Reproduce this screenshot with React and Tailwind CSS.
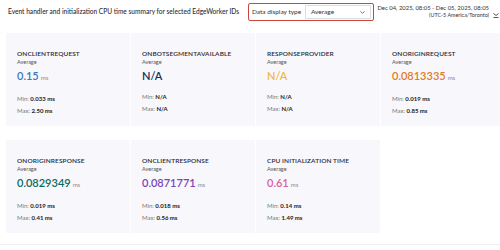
import React from 'react';
import { ChevronDown } from 'lucide-react';

const rowOne = [
  { name: 'ONCLIENTREQUEST', value: '0.15', unit: true, color: 'text-[#3a7cc0]', min: '0.033 ms', max: '2.50 ms' },
  { name: 'ONBOTSEGMENTAVAILABLE', value: 'N/A', unit: false, color: 'text-[#0d2f5a] font-bold', min: 'N/A', max: 'N/A' },
  { name: 'RESPONSEPROVIDER', value: 'N/A', unit: false, color: 'text-[#f1b744] font-bold', min: 'N/A', max: 'N/A' },
  { name: 'ONORIGINREQUEST', value: '0.0813335', unit: true, color: 'text-[#e27c1c]', min: '0.019 ms', max: '0.85 ms' },
];

const rowTwo = [
  { name: 'ONORIGINRESPONSE', value: '0.0829349', unit: true, color: 'text-[#0c6a62]', min: '0.019 ms', max: '0.41 ms' },
  { name: 'ONCLIENTRESPONSE', value: '0.0871771', unit: true, color: 'text-[#7b45b8]', min: '0.018 ms', max: '0.56 ms' },
  { name: 'CPU INITIALIZATION TIME', value: '0.61', unit: true, color: 'text-[#d5649c]', min: '0.14 ms', max: '1.49 ms' },
];

const MetricCard = ({ m }) => (
  <div className="bg-[#f8f7fc] pl-[11px] pt-[16px] pb-[11px]">
    <div className="text-[6.5px] leading-[9px] font-semibold text-[#2a2a33] tracking-[0.1px] whitespace-nowrap">{m.name}</div>
    <div className="text-[5.5px] leading-[9px] text-[#555]">Average</div>
    <div className="mt-[2px] flex items-baseline leading-[14px]">
      <span className={`text-[11px] font-semibold ${m.color}`}>{m.value}</span>
      {m.unit && <span className="ml-[2px] text-[6px] text-[#8a8a95]">ms</span>}
    </div>
    <div className="mt-[9px] text-[6px] leading-[9px] text-[#777]">
      Min: <span className="font-bold text-[#222]">{m.min}</span>
    </div>
    <div className="mt-[3px] text-[6px] leading-[9px] text-[#777]">
      Max: <span className="font-bold text-[#222]">{m.max}</span>
    </div>
  </div>
);

export default function App() {
  return (
    <div className="w-[500px] h-[250px] overflow-hidden bg-white" style={{ fontFamily: 'Lato, "Open Sans", sans-serif' }}>
      <div className="flex items-start h-[33px]">
        <div className="pl-[8px] pt-[6px] w-[251px] text-[6.6px] leading-[10px] text-[#2b2b33] font-medium whitespace-nowrap">
          Event handler and initialization CPU time summary for selected EdgeWorker IDs
        </div>
        <div className="mt-[3px] w-[128px] h-[18px] border border-[#c7463d] rounded-[2px] flex items-center pl-[3px] pr-[2px]">
          <span className="text-[6.5px] text-[#333] w-[53px]">Data display type</span>
          <div className="flex-1 h-[13.5px] bg-white border border-[#dcdce2] rounded-[1px] flex items-center justify-between pl-[5px] pr-[4px]">
            <span className="text-[6.5px] text-[#333]">Average</span>
            <ChevronDown className="w-[7px] h-[7px] text-[#444]" strokeWidth={2.5} />
          </div>
        </div>
        <div className="ml-[3px] pt-[4px] flex flex-col items-end leading-[7px]">
          <span className="text-[5.9px] text-[#333] whitespace-nowrap">Dec 04, 2025, 08:05 - Dec 05, 2025, 08:05</span>
          <span className="text-[5.4px] text-[#333] whitespace-nowrap mt-[0.5px]">(UTC-5 America/Toronto)</span>
        </div>
        <svg className="ml-[3px] mt-[11px] shrink-0" width="8" height="8" viewBox="0 0 8 8" fill="none" stroke="#444" strokeWidth="0.9">
          <path d="M1.5 2.5 L4 4.5 L6.5 2.5" />
          <path d="M1.5 6.5 H6.5" />
        </svg>
      </div>

      <div className="pl-[6px]">
        <div className="grid grid-cols-[repeat(4,124px)] gap-[1px] w-[510px]">
          {rowOne.map((m) => <MetricCard key={m.name} m={m} />)}
        </div>
        <div className="mt-[14px] grid grid-cols-[repeat(3,124px)] gap-[1px]">
          {rowTwo.map((m) => <MetricCard key={m.name} m={m} />)}
        </div>
      </div>
      <div className="mt-[11px] h-px bg-[#ececf1]" />
    </div>
  );
}
